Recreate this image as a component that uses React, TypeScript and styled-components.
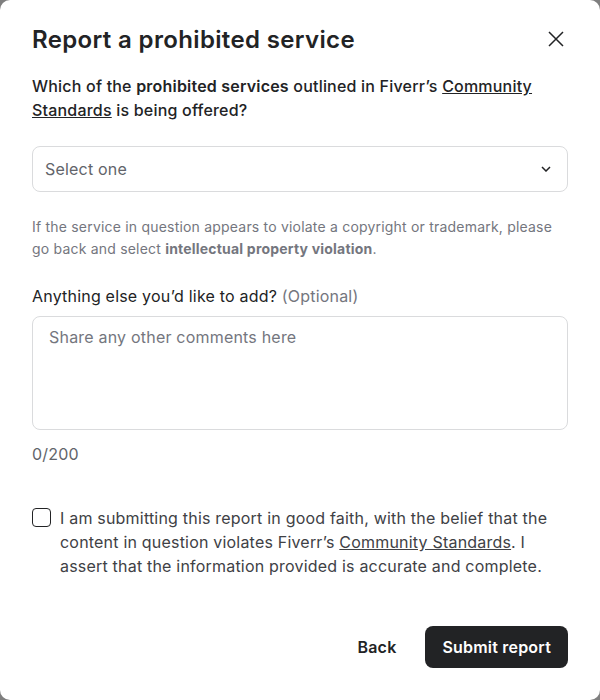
import * as React from 'react';
import styled, { createGlobalStyle } from 'styled-components';

const Global = createGlobalStyle`
  html, body {
    margin: 0;
    padding: 0;
    background: #7f7f7f;
  }
  body {
    font-family: Inter, "Liberation Sans", sans-serif;
    letter-spacing: 0.2px;
    color: #222325;
  }
  * { box-sizing: border-box; }
`;

const Modal = styled.div`
  width: 600px;
  height: 700px;
  background: #fff;
  border-radius: 10px;
  padding: 22px 32px 32px 32px;
  display: flex;
  flex-direction: column;
`;

const Header = styled.div`
  display: flex;
  align-items: center;
  justify-content: space-between;
  height: 34px;
`;

const Title = styled.h2`
  margin: 0;
  font-size: 24px;
  font-weight: 600;
  letter-spacing: 0.35px;
  color: #222325;
`;

const CloseBtn = styled.button`
  border: none;
  background: none;
  padding: 0;
  margin: 0 4px 0 0;
  display: flex;
  cursor: pointer;
`;

const Question = styled.p`
  margin: 18px 0 0 0;
  font-size: 16px;
  line-height: 24px;
  font-weight: 500;
  color: #222325;
`;

const Strong = styled.span<{ $weight?: number }>`
  font-weight: ${p => p.$weight ?? 600};
`;

const Link = styled.a`
  color: inherit;
  text-decoration: underline;
`;

const SelectBox = styled.div`
  margin-top: 24px;
  height: 46px;
  border: 1px solid #dadbdd;
  border-radius: 8px;
  display: flex;
  align-items: center;
  justify-content: space-between;
  padding: 0 16px 0 12px;
  font-size: 16px;
  color: #62646a;
`;

const Helper = styled.p`
  margin: 24px 0 0 0;
  font-size: 14px;
  line-height: 22px;
  color: #74767e;
`;

const Label = styled.div`
  margin-top: 24px;
  font-size: 16px;
  line-height: 24px;
  color: #222325;
`;

const Muted = styled.span`
  color: #74767e;
`;

const TextArea = styled.textarea`
  margin-top: 8px;
  width: 536px;
  height: 114px;
  border: 1px solid #dadbdd;
  border-radius: 8px;
  padding: 8px 16px;
  resize: none;
  font-family: inherit;
  letter-spacing: inherit;
  font-size: 16px;
  line-height: 24px;
  color: #222325;
  outline: none;
  &::placeholder { color: #74767e; }
`;

const Counter = styled.div`
  margin-top: 12px;
  font-size: 16px;
  line-height: 24px;
  color: #62646a;
`;

const Consent = styled.label`
  margin-top: 40px;
  display: flex;
  gap: 9px;
  font-size: 16px;
  line-height: 24px;
  color: #404145;
`;

const Box = styled.span`
  flex: none;
  width: 19px;
  height: 19px;
  margin-top: 2px;
  border: 1.5px solid #222325;
  border-radius: 4px;
`;

const Footer = styled.div`
  margin-top: auto;
  display: flex;
  justify-content: flex-end;
  align-items: center;
  gap: 29px;
`;

const Button = styled.button<{ $primary?: boolean }>`
  border: none;
  border-radius: 8px;
  height: 42px;
  padding: ${p => (p.$primary ? '0 17px' : '0')};
  font-family: inherit;
  letter-spacing: inherit;
  font-size: 16px;
  font-weight: 600;
  cursor: pointer;
  background: ${p => (p.$primary ? '#222325' : 'transparent')};
  color: ${p => (p.$primary ? '#fff' : '#222325')};
`;

export default function App() {
  return (
    <>
      <Global />
      <Modal>
        <Header>
          <Title>Report a prohibited service</Title>
          <CloseBtn aria-label="Close">
            <svg width="16" height="16" viewBox="0 0 16 16">
              <path d="M1 1L15 15M15 1L1 15" stroke="#222325" strokeWidth="1.5" />
            </svg>
          </CloseBtn>
        </Header>
        <Question>
          Which of the <Strong>prohibited services</Strong> outlined in Fiverr’s{' '}
          <Link>Community Standards</Link> is being offered?
        </Question>
        <SelectBox>
          <span>Select one</span>
          <svg width="10" height="6" viewBox="0 0 10 6">
            <path d="M1 1L5 5L9 1" stroke="#222325" strokeWidth="1.5" fill="none" />
          </svg>
        </SelectBox>
        <Helper>
          If the service in question appears to violate a copyright or trademark, please go back and
          select <Strong $weight={700}>intellectual property violation</Strong>.
        </Helper>
        <Label>
          Anything else you’d like to add? <Muted>(Optional)</Muted>
        </Label>
        <TextArea placeholder="Share any other comments here" />
        <Counter>0/200</Counter>
        <Consent>
          <Box />
          <span>
            I am submitting this report in good faith, with the belief that the content in question
            violates Fiverr’s <Link>Community Standards</Link>. I assert that the information provided
            is accurate and complete.
          </span>
        </Consent>
        <Footer>
          <Button>Back</Button>
          <Button $primary>Submit report</Button>
        </Footer>
      </Modal>
    </>
  );
}
